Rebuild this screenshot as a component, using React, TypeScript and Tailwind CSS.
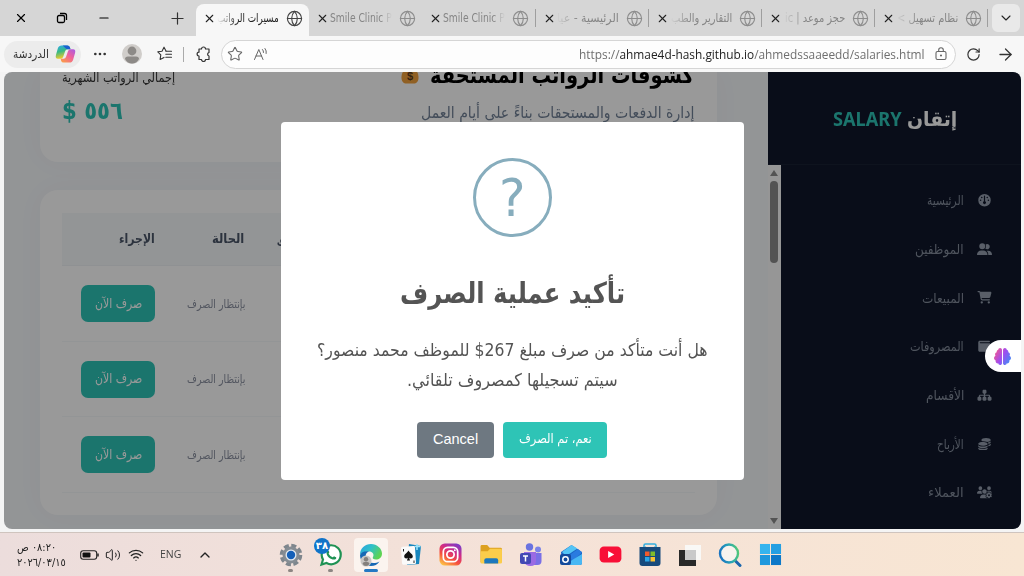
import React, { useLayoutEffect, useRef, useState } from "react";
import {
	ArrowRight,
	ChevronDown,
	ChevronUp,
	Globe,
	Minus,
	MoreHorizontal,
	Plus,
	RotateCw,
	Star,
	Volume2,
	Wifi,
	X,
} from "lucide-react";
import {
	FaBrain,
	FaCartShopping,
	FaCoins,
	FaGauge,
	FaSitemap,
	FaUserGroup,
	FaUsersGear,
	FaWallet,
} from "react-icons/fa6";

// One line of text squeezed or stretched to an exact width
function Fit({
	w,
	dir = "rtl",
	className = "",
	children,
}: {
	w: number;
	dir?: "rtl" | "ltr";
	className?: string;
	children: React.ReactNode;
}) {
	const ref = useRef<HTMLSpanElement>(null);
	const [scale, setScale] = useState(1);

	useLayoutEffect(() => {
		if (ref.current) setScale(w / ref.current.offsetWidth);
	}, [w]);

	return (
		<span dir="ltr" className={`flex shrink-0 ${className}`} style={{ width: w }}>
			<span
				ref={ref}
				dir={dir}
				className="block shrink-0 origin-left whitespace-nowrap"
				style={{ transform: `scaleX(${scale})` }}
			>
				{children}
			</span>
		</span>
	);
}

const tabs = [
	{ title: "مسيرات الرواتب", w: 62, rtl: true, active: true },
	{ title: "Smile Clinic P", w: 62, rtl: false, line: false },
	{ title: "Smile Clinic P", w: 62, rtl: false, line: true },
	{ title: "الرئيسية - عيا", w: 62, rtl: true, line: true },
	{ title: "التقارير والطب", w: 61, rtl: true, line: true },
	{ title: "حجز موعد | ic", w: 60, rtl: true, line: true },
	{ title: "نظام تسهيل >", w: 61, rtl: true, line: true },
];

function TabStrip() {
	return (
		<div className="flex h-9 items-center bg-[#d6d6d6] text-black">
			<div className="flex w-[196px] shrink-0 items-center">
				<X className="ml-[14px] h-[14px] w-[14px]" strokeWidth={2} />
				<svg className="ml-[28px] h-3 w-3" viewBox="0 0 12 12" fill="none" stroke="black" strokeWidth="1.3">
					<rect x="1.5" y="3.5" width="7" height="7" rx="1.5" />
					<path d="M4 1.5h4.5a2 2 0 0 1 2 2V8" />
				</svg>
				<Minus className="ml-[29px] h-[14px] w-[14px]" strokeWidth={2} />
				<Plus className="ml-[57px] h-[19px] w-[19px] text-[#333]" strokeWidth={1.5} />
			</div>
			{tabs.map((t, i) => (
				<div
					key={i}
					className={`flex w-[113.200px] shrink-0 items-center ${
						t.active ? "mt-1 h-8 rounded-t-lg bg-[#f7f7f7] pb-1" : "h-8"
					}`}
				>
					<X className="ml-[7px] h-[13px] w-[13px] shrink-0 text-[#222]" strokeWidth={2} />
					<div
						className={`ml-[1px] flex w-[62px] text-[12px] leading-5 ${
							t.rtl
								? "justify-end mask-l-from-65% mask-l-to-100%"
								: "justify-start mask-r-from-80% mask-r-to-100%"
						} ${t.active ? "text-[#222]" : "text-[#858585]"}`}
					>
						<Fit w={t.w} dir={t.rtl ? "rtl" : "ltr"} className="font-['DejaVu_Sans','Noto_Sans',sans-serif]">
							{t.title}
						</Fit>
					</div>
					<Globe
						className={`ml-[7px] h-[17px] w-[17px] shrink-0 ${t.active ? "text-[#444]" : "text-[#8d8d8d]"}`}
						strokeWidth={1.6}
					/>
					{t.line && <span className="ml-auto h-[18px] w-px bg-[#9e9e9e]" />}
				</div>
			))}
			<div className="ml-[4px] flex h-7 w-7 shrink-0 items-center justify-center rounded-md bg-[#e9e9e9]">
				<ChevronDown className="h-4 w-4 text-[#222]" strokeWidth={1.6} />
			</div>
		</div>
	);
}

function CopilotLogo() {
	return (
		<svg className="h-[20px] w-[21px]" viewBox="0 0 22 20">
			<defs>
				<linearGradient id="copA" x1="0" y1="0" x2="0.3" y2="1">
					<stop offset="0" stopColor="#2aa8f2" />
					<stop offset="0.5" stopColor="#39b982" />
					<stop offset="1" stopColor="#f3cb2a" />
				</linearGradient>
				<linearGradient id="copB" x1="1" y1="0" x2="0.2" y2="1">
					<stop offset="0" stopColor="#a55be8" />
					<stop offset="0.5" stopColor="#f0609a" />
					<stop offset="1" stopColor="#fb9a4a" />
				</linearGradient>
			</defs>
			<path d="M7 1h6q2 0 2.600 2l.6 2h-3q-2 0-2.600 2l-2 6q-.6 2-2.600 2H3q-3 0-2-4l2-7q1-3 4-3z" fill="url(#copA)" />
			<path d="M8 1h5q2 0 2.600 2l.6 2h-4L8 1z" fill="#1b5fd0" />
			<path d="M15 19H9q-2 0-2.600-2L6 15h3q2 0 2.600-2l2-6q.6-2 2.600-2H19q3 0 2 4l-2 7q-1 3-4 3z" fill="url(#copB)" />
		</svg>
	);
}

function Toolbar() {
	return (
		<div className="flex h-9 items-center bg-[#f7f7f7] text-[#333]">
			<div className="ml-1 flex h-[27px] w-[77px] items-center gap-[6px] rounded-full bg-[#ececec] pl-[9px]">
				<Fit w={36} className="text-[12px] leading-4">
					الدردشة
				</Fit>
				<CopilotLogo />
			</div>
			<MoreHorizontal className="ml-[11px] h-4 w-4" strokeWidth={2} />
			<svg className="ml-[14px] h-5 w-5" viewBox="0 0 20 20">
				<circle cx="10" cy="10" r="10" fill="#d0cdca" />
				<circle cx="10" cy="7" r="4.400" fill="#8d8a87" />
				<path d="M3 15q0-2.500 3-2.500h8q3 0 3 2.500-2.500 4.500-7 4.500T3 15z" fill="#8d8a87" />
			</svg>
			<svg
				className="ml-[15px] h-4 w-4"
				viewBox="0 0 16 16"
				fill="none"
				stroke="currentColor"
				strokeWidth="1.1"
				strokeLinejoin="round"
				strokeLinecap="round"
			>
				<path d="M9 5 7 1.200 5 5.200.8 5.800l3 3-.7 4.600 3.900-2" />
				<path d="M9 5.200h5.500M8.800 8.200h5.700M8.800 11.200h5.700" />
			</svg>
			<span className="ml-[10px] h-[15px] w-px bg-[#aaa]" />
			<svg
				className="ml-[12px] h-4 w-[15px]"
				viewBox="0 0 15 16"
				fill="none"
				stroke="currentColor"
				strokeWidth="1.200"
				strokeLinejoin="round"
			>
				<path d="M3 3h2.500a2 2 0 0 1 4 0H13v3.500a1.800 1.800 0 0 0 0 3.500v3.500H9.500a2 2 0 0 1-4 0H3V10a1.900 1.900 0 0 1 0-3.800z" />
			</svg>
			<div className="ml-[10px] flex h-[29px] w-[735px] items-center rounded-full border border-[#d5d5d5] bg-[#fdfdfd]">
				<Star className="ml-[5px] h-4 w-4 text-[#666]" strokeWidth={1.6} />
				<svg className="ml-[10px] h-[14px] w-4" viewBox="0 0 16 14" fill="none" stroke="#666" strokeWidth="1" strokeLinecap="round">
					<path d="M1.500 12.500 5.800 2.500l4.200 10M3 9h5.600M9.500 2.500q1.200 1.300 1 3M12 1.500q1.800 2.300 1.200 5" />
				</svg>
				<Fit
					w={346}
					dir="ltr"
					className="ml-[310px] font-['Open_Sans','Noto_Sans',sans-serif] text-[13px] leading-5 text-[#6f6f6f]"
				>
					https://<span className="text-[#222]">ahmae4d-hash.github.io</span>
					/ahmedssaaeedd/salaries.html
				</Fit>
				<svg className="ml-[10px] h-[14px] w-3" viewBox="0 0 12 14" fill="none" stroke="#666" strokeWidth="1.100">
					<rect x="1" y="4.500" width="10" height="8" rx="1.500" />
					<path d="M3.700 4.500V3a2.300 2.300 0 0 1 4.600 0v1.500" />
					<circle cx="6" cy="8.500" r=".5" fill="#666" />
				</svg>
			</div>
			<RotateCw className="ml-[10px] h-[15px] w-[15px]" strokeWidth={1.900} />
			<ArrowRight className="ml-[15px] h-[19px] w-[19px]" strokeWidth={1.600} />
		</div>
	);
}

function MoneyBag() {
	return (
		<svg className="h-[22px] w-[18px]" viewBox="0 0 18 22">
			<path d="M6 1h6l-1.500 5h-3z" fill="#e39a35" />
			<path d="M6.500 4h5c4 3 6 6 6 10.500 0 4-2 6-5 6h-7c-3 0-5-2-5-6C.5 10 2.500 7 6.500 4z" fill="#f0a03c" />
			<text x="9" y="16.500" textAnchor="middle" className="font-['Liberation_Sans',sans-serif] text-[11px] font-bold" fill="#5a3a1c">
				$
			</text>
		</svg>
	);
}

function SummaryCard() {
	return (
		<div className="flex h-[90px] w-[677px] justify-between rounded-b-[18px] bg-white pr-[23px] pl-[22px] shadow-[0_0_30px_rgba(0,0,0,0.03)]">
			<div className="-mt-[4px] flex flex-col">
				<Fit w={113} className="text-[13px] leading-5 text-[#333]">
					إجمالي الرواتب الشهرية
				</Fit>
				<Fit w={61} className="mt-[7px] text-[24px] leading-8 font-bold text-[#2ec4b6]">
					٥٥٦ $
				</Fit>
			</div>
			<div className="-mt-[13px] flex flex-col items-end">
				<div className="flex h-8 items-center gap-[11px]">
					<div className="-mt-[2px]">
						<MoneyBag />
					</div>
					<Fit w={264} className="text-[23px] leading-8 font-bold text-black">
						كشوفات الرواتب المستحقة
					</Fit>
				</div>
				<Fit w={273} className="mt-[10px] text-[16px] leading-6 text-[#718096]">
					إدارة الدفعات والمستحقات بناءً على أيام العمل
				</Fit>
			</div>
		</div>
	);
}

function SalariesTable() {
	return (
		<div className="mt-7 h-[325px] w-[677px] rounded-[18px] bg-white px-[22px] pt-[23px] shadow-[0_0_30px_rgba(0,0,0,0.03)]">
			<div className="flex h-[53px] items-center border-b border-[#eff2f5] bg-[#f5f8fa] pl-[57px] text-[13px] font-bold text-[#4a5568]">
				<Fit w={36}>الإجراء</Fit>
				<Fit w={32} className="ml-[57px]">
					الحالة
				</Fit>
				<Fit w={70} className="ml-[33px]">
					صافي المستحق
				</Fit>
			</div>
			{[0, 1, 2].map((row) => (
				<div key={row} className="flex h-[75.700px] items-center border-b border-[#f6f8fa] pl-[19px]">
					<div className="flex h-[37px] w-[74px] items-center justify-center rounded-[7px] bg-[#2ec4b6] text-[13px] text-white">
						<Fit w={47}>صرف الآن</Fit>
					</div>
					<Fit w={58} className="ml-[32px] pt-[2px] text-[11.500px] text-[#8a90a0]">
						بإنتظار الصرف
					</Fit>
				</div>
			))}
		</div>
	);
}

const navItems = [
	{ label: "الرئيسية", w: 37, icon: FaGauge },
	{ label: "الموظفين", w: 49, icon: FaUserGroup },
	{ label: "المبيعات", w: 42, icon: FaCartShopping },
	{ label: "المصروفات", w: 54, icon: FaWallet },
	{ label: "الأقسام", w: 38, icon: FaSitemap },
	{ label: "الأرباح", w: 27, icon: FaCoins },
	{ label: "العملاء", w: 36, icon: FaUsersGear },
];

function Sidebar() {
	return (
		<div className="flex w-[253px] shrink-0 flex-col bg-[#0f172a]">
			<div className="flex h-[93px] items-center justify-center gap-[5px] border-b border-[#182033] pt-[2px] text-[20px] font-bold">
				<Fit w={69} dir="ltr" className="font-['Noto_Sans',sans-serif] text-[20px] font-bold text-[#2ec4b6]">
					SALARY
				</Fit>
				<Fit w={50} className="text-white">
					إتقان
				</Fit>
			</div>
			<div className="flex flex-1">
				<div className="flex w-[13px] flex-col items-center bg-[#fafafa] py-[5px] pr-px">
					<span className="h-0 w-0 border-x-4 border-b-[6px] border-x-transparent border-b-[#8b8b8b]" />
					<span className="mt-[5px] h-[82px] w-2 rounded-full bg-[#8b8b8b]" />
					<span className="mt-auto h-0 w-0 border-x-4 border-t-[6px] border-x-transparent border-t-[#8b8b8b]" />
				</div>
				<div className="flex flex-1 flex-col pt-[11px]">
					{navItems.map(({ label, w, icon: Icon }) => (
						<div
							key={label}
							className="flex h-[48.700px] shrink-0 items-center justify-end gap-[13px] pr-[29px] text-[13.500px] text-[#848c9c]"
						>
							<Fit w={w}>{label}</Fit>
							<Icon className="h-[12.500px] w-[15px] text-[#949dad]" />
						</div>
					))}
				</div>
			</div>
		</div>
	);
}

function ConfirmDialog() {
	return (
		<div className="absolute top-[50px] left-[277px] flex h-[358px] w-[463px] flex-col items-center rounded-[4px] bg-white text-[#545454]">
			<div className="mt-[36px] flex h-[79px] w-[79px] items-center justify-center rounded-full border-[3px] border-[#87adbd] text-[#87adbd]">
				<Fit w={27} dir="ltr" className="text-[52px] leading-[60px]">
					?
				</Fit>
			</div>
			<Fit w={225} className="mt-[31px] text-[29px] leading-[50px] font-bold">
				تأكيد عملية الصرف
			</Fit>
			<Fit w={391} className="mt-[17px] text-[17.500px] leading-[30px]">
				هل أنت متأكد من صرف مبلغ 267$ للموظف محمد منصور؟
			</Fit>
			<Fit w={211} className="text-[17.500px] leading-[30px]">
				سيتم تسجيلها كمصروف تلقائي.
			</Fit>
			<div className="mt-[27px] flex gap-[9px] pr-px text-white">
				<button className="flex h-9 w-[77px] items-center justify-center rounded-[4px] bg-[#6e7881] font-['Liberation_Sans',sans-serif] text-[14.500px]">
					<Fit w={45} dir="ltr">
						Cancel
					</Fit>
				</button>
				<button className="flex h-9 w-[104px] items-center justify-center rounded-[4px] bg-[#2ec4b6] pb-[2px] text-[13px]">
					<Fit w={73}>نعم، تم الصرف</Fit>
				</button>
			</div>
		</div>
	);
}

function AssistantButton() {
	return (
		<div className="absolute top-[268px] right-0 flex h-[32px] w-[36px] items-center rounded-l-full bg-white pl-[9px]">
			<svg width="0" height="0" className="absolute">
				<linearGradient id="brain" gradientUnits="userSpaceOnUse" x1="0" y1="100" x2="512" y2="400">
					<stop offset="0" stopColor="#f7568b" />
					<stop offset="0.5" stopColor="#a04df0" />
					<stop offset="1" stopColor="#3f8cf5" />
				</linearGradient>
			</svg>
			<FaBrain className="h-[17px] w-[17px]" fill="url(#brain)" />
		</div>
	);
}

const taskIcons = [
	// settings
	<svg viewBox="0 0 24 24" className="h-6 w-6">
		<circle cx="12" cy="12" r="9.500" fill="none" stroke="#7e868d" strokeWidth="3.600" strokeDasharray="4.970 2.490" />
		<circle cx="12" cy="12" r="8.500" fill="#858c93" />
		<circle cx="12" cy="12" r="5.500" fill="#e3eaf0" />
		<circle cx="12" cy="12" r="4.200" fill="#1560b8" />
	</svg>,
	// whatsapp with unread count
	<div className="relative">
		<svg viewBox="0 0 24 24" className="h-6 w-6" fill="none">
			<path d="M2.500 21.500 4 16.500A9.500 9.500 0 1 1 7.500 20z" fill="#fff" stroke="#1f9254" strokeWidth="2.200" />
			<path d="M8 7.500c1-1 2 .5 2.300 1.500.2 1-1 1.200-.5 2 1 1.500 2 2.500 3.600 3.200.8.400 1.200-1.200 2-.8 1.200.5 2.600 1 1.600 2.300-2 2.500-9.500-.7-9.500-6 0-1 .1-1.700.5-2.200z" fill="#1f9254" />
		</svg>
		<span className="absolute -top-[5px] -left-[5px] flex h-4 w-4 items-center justify-center rounded-full bg-[#0f73c8] text-[10px] font-bold text-white">
			٣٨
		</span>
	</div>,
	// edge with profile picture
	<svg viewBox="0 0 24 24" className="h-6 w-6">
		<defs>
			<linearGradient id="edgeTop" x1="0" y1="0" x2="1" y2="0.500">
				<stop offset="0" stopColor="#2a9fe0" />
				<stop offset="0.500" stopColor="#2fc1c9" />
				<stop offset="1" stopColor="#5ed352" />
			</linearGradient>
		</defs>
		<path d="M1 12C1 5 6 1 12 1s11 4.500 11 9.500c0 4-3 6-6 6-2.500 0-4-1-3-2.500 1.500-3-.5-5.500-4-5.500C6 8.500 2 10 1 12z" fill="url(#edgeTop)" />
		<path d="M1 12c1-3 5-4.500 9-3.500-3 1-4 4-3 7 1.500 4.500 8 6 13.500 3-2 3-5 4.500-8.500 4.500-6 0-11-4.500-11-11z" fill="#1768b5" />
		<circle cx="7" cy="18" r="5.500" fill="#c9c6c4" />
		<circle cx="7" cy="16.300" r="2.200" fill="#84807d" />
		<path d="M3.500 20.500q.5-1.800 3.500-1.800t3.500 1.800Q9.500 23 7 23t-3.500-2.500z" fill="#84807d" />
	</svg>,
	// solitaire
	<svg viewBox="0 0 22 24" className="h-6 w-[22px]">
		<path d="m9 1 12 2-2 18-12 1z" fill="#1786be" />
		<path d="M17 1v6M14.500 3.500h6" stroke="#9fe4fa" strokeWidth="1.500" />
		<rect x="1.500" y="3.500" width="14" height="18" rx="1.500" fill="#fafafa" transform="rotate(-4 8 12)" />
		<path d="M8.500 7.500c1 2.200 4.300 3.500 4.300 6 0 2-2.600 2.600-3.600 1.200l.8 2.800H7l.8-2.800c-1 1.400-3.600.8-3.600-1.200 0-2.500 3.300-3.800 4.300-6z" fill="#111" />
		<path d="M3.500 6v2.500M14 17.500V20" stroke="#222" />
	</svg>,
	// instagram
	<svg viewBox="0 0 24 24" className="h-[23px] w-[23px]" fill="none">
		<defs>
			<linearGradient id="insta" x1="0.200" y1="1" x2="0.800" y2="0">
				<stop offset="0" stopColor="#fcc247" />
				<stop offset="0.350" stopColor="#f6503c" />
				<stop offset="0.650" stopColor="#d02b88" />
				<stop offset="1" stopColor="#7a3cc8" />
			</linearGradient>
		</defs>
		<rect x="0.500" y="0.500" width="23" height="23" rx="5.500" fill="url(#insta)" />
		<rect x="4.500" y="4.500" width="15" height="15" rx="4.500" stroke="#fff" strokeWidth="1.800" />
		<circle cx="12" cy="12" r="3.800" stroke="#fff" strokeWidth="1.800" />
		<circle cx="16.500" cy="7.500" r="1" fill="#fff" />
	</svg>,
	// file explorer
	<svg viewBox="0 0 24 22" className="h-[21px] w-6">
		<path d="M1 2.500Q1 1 2.500 1H8l2.500 3H22q1.500 0 1.500 1.500V19H1z" fill="#dda01f" />
		<path d="M1 7.500h7.500L11 5h11q1.500 0 1.500 1.500V19q0 1.500-1.500 1.500H2.500Q1 20.500 1 19z" fill="#fbcd4b" />
		<path d="M5 20.500V17q0-2 2-2h10.500q2 0 2 2v3.500z" fill="#1d78bd" />
	</svg>,
	// teams
	<svg viewBox="0 0 24 24" className="h-6 w-6">
		<circle cx="19" cy="6.500" r="3" fill="#7b83e8" />
		<circle cx="10.500" cy="4" r="3.700" fill="#6a73e0" />
		<path d="M15 10h7.500v8q0 4-4 4H15z" fill="#7a6fe6" />
		<path d="M5 9h12v9q0 5-5.500 5T5 18z" fill="#9a6ae4" />
		<rect x="1" y="10" width="11" height="11" rx="2" fill="#4348b4" />
		<path d="M4 13h5M6.500 13v5.500" stroke="#fff" strokeWidth="1.500" />
	</svg>,
	// outlook
	<svg viewBox="0 0 24 24" className="h-6 w-6">
		<path d="M2 9 12.500 2 23 9v11q0 2-2 2H5q-2 0-2-2z" fill="#1c66c4" />
		<path d="M3 9 12.500 2l6 3.500L7 13z" fill="#54c4f5" />
		<path d="m8 14 11-8 4 3.500-9 8z" fill="#2a7be0" />
		<path d="m5 22 18-11v9q0 2-2 2z" fill="#49b8f4" />
		<rect x="1" y="11" width="11" height="11" rx="2" fill="#134a9c" />
		<circle cx="6.500" cy="16.500" r="2.700" fill="none" stroke="#fff" strokeWidth="1.500" />
	</svg>,
	// youtube
	<svg viewBox="0 0 24 18" className="h-[17px] w-[23px]">
		<rect x="0.500" y="0.500" width="23" height="17" rx="4.500" fill="#f80f37" />
		<path d="m9.500 5.300 6.500 3.700-6.500 3.700z" fill="#fff" />
	</svg>,
	// store
	<svg viewBox="0 0 24 24" className="h-6 w-6">
		<path d="M6 5V2.500Q6 1 7.500 1h9Q18 1 18 2.500V5" fill="none" stroke="#35aede" strokeWidth="1.600" />
		<path d="M1.500 4h21v16q0 3-3 3h-15q-3 0-3-3z" fill="#174a7c" />
		<path d="M7.500 4V3.500M16.500 4v-.5" stroke="#35aede" />
		<path d="M7 8.500h4.500V13H7z" fill="#f05a2c" />
		<path d="M12.500 8.500H17V13h-4.500z" fill="#80bb2b" />
		<path d="M7 14h4.500v4.500H7z" fill="#2aa6e8" />
		<path d="M12.500 14H17v4.500h-4.500z" fill="#fbc12f" />
	</svg>,
	// task view
	<svg viewBox="0 0 24 24" className="h-6 w-6">
		<path d="M1 7h17v16H1z" fill="#292929" />
		<path d="M7 2h16v15H7z" fill="#fafafa" fillOpacity="0.9" />
		<path d="M7 7h11v10H7z" fill="#c9c9c9" />
	</svg>,
	// search
	<svg viewBox="0 0 24 24" className="h-6 w-6" fill="none">
		<defs>
			<linearGradient id="srch" x1="0" y1="0.500" x2="1" y2="0.300">
				<stop offset="0" stopColor="#1a73c0" />
				<stop offset="0.500" stopColor="#26a3b8" />
				<stop offset="1" stopColor="#50c878" />
			</linearGradient>
		</defs>
		<path d="m17 17.500 5 5" stroke="#1b66ad" strokeWidth="3" strokeLinecap="round" />
		<circle cx="11" cy="10.500" r="9" fill="#f8f3ee" stroke="url(#srch)" strokeWidth="2.400" />
	</svg>,
	// start
	<svg viewBox="0 0 24 24" className="h-[23px] w-[23px]">
		<path d="M1 1h10.500v10.500H1z" fill="#35b4ee" />
		<path d="M12.500 1H23v10.500H12.500z" fill="#249fe2" />
		<path d="M1 12.500h10.500V23H1z" fill="#1f98dd" />
		<path d="M12.500 12.500H23V23H12.500z" fill="#0d78c8" />
	</svg>,
];

function Taskbar() {
	return (
		<div className="flex h-11 items-center border-t border-[#cfc4be] bg-linear-to-r from-[#ecdddc] via-[#f5e2d8] to-[#f8e6d3] text-[#222]">
			<div className="ml-[17px] w-[50px] text-[11px] leading-[15px]">
				<Fit w={39}>٠٨:٢٠ ص</Fit>
				<Fit w={49} dir="ltr">
					٢٠٢٦/٠٣/١٥
				</Fit>
			</div>
			<svg className="ml-[13px] h-[10px] w-[19px]" viewBox="0 0 19 10">
				<rect x="0.700" y="0.700" width="16" height="8.600" rx="2.500" fill="none" stroke="#222" strokeWidth="1.100" />
				<rect x="2.500" y="2.500" width="8" height="5" rx="1" fill="#111" />
				<path d="M18 3.500v3" stroke="#222" strokeWidth="1.500" />
			</svg>
			<Volume2 className="ml-[6px] h-4 w-4" strokeWidth={1.500} />
			<Wifi className="ml-[7px] h-4 w-4" strokeWidth={1.900} />
			<Fit w={21} dir="ltr" className="ml-[16px] font-['Open_Sans',sans-serif] text-[11px] text-[#444]">
				ENG
			</Fit>
			<ChevronUp className="ml-[16px] h-4 w-4" strokeWidth={2} />
			<div className="ml-[58px] flex">
				{taskIcons.map((icon, i) => (
					<div
						key={i}
						className={`relative flex h-[34px] w-[39.950px] items-center justify-center ${
							i === 2 ? "before:absolute before:inset-x-[3px] before:inset-y-0 before:rounded-[4px] before:bg-[#fbf4ef]" : ""
						}`}
					>
						<div className="relative">{icon}</div>
						{i < 3 && (
							<span
								className={`absolute bottom-0 h-[2.500px] rounded-full ${
									i === 2 ? "w-[14px] bg-[#2479c4]" : "w-[5px] bg-[#8d8683]"
								}`}
							/>
						)}
					</div>
				))}
			</div>
		</div>
	);
}

export default function App() {
	return (
		<div className="h-[576px] w-[1024px] overflow-hidden bg-[#f4f4f4] font-['DejaVu_Sans',sans-serif]">
			<TabStrip />
			<Toolbar />
			<div className="relative mb-[3px] ml-1 flex h-[457px] w-[1017px] overflow-hidden rounded-lg bg-[#f5f8fb]">
				<div className="w-[764px] shrink-0 pl-9">
					<SummaryCard />
					<SalariesTable />
				</div>
				<Sidebar />
				<div className="absolute inset-0 bg-black/40" />
				<ConfirmDialog />
				<AssistantButton />
			</div>
			<Taskbar />
		</div>
	);
}
